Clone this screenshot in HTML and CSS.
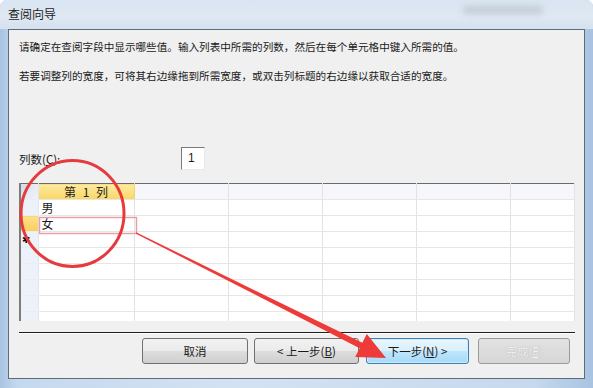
FILE: index.html
```html
<!DOCTYPE html>
<html lang="zh-CN">
<head>
    <meta charset="UTF-8">
    <title>查阅向导</title>
    <link rel="stylesheet" href="styles.css">
</head>
<body>
    <div class="window">
        <div class="titlebar">
            <span class="title">查阅向导</span>
            <span class="title-blur"></span>
        </div>

        <div class="panel">
            <div class="intro">
                <p>请确定在查阅字段中显示哪些值。输入列表中所需的列数，然后在每个单元格中键入所需的值。</p>
                <p>若要调整列的宽度，可将其右边缘拖到所需宽度，或双击列标题的右边缘以获取合适的宽度。</p>
            </div>

            <div class="count-row">
                <label>列数(<u>C</u>):</label>
                <div class="count-input">1</div>
            </div>

            <table class="grid">
                <colgroup>
                    <col class="sel-col">
                    <col class="first-col">
                    <col class="col"><col class="col"><col class="col"><col class="col">
                    <col>
                </colgroup>
                <tr class="head">
                    <th class="sel corner"></th>
                    <th class="active-head">第 1 列</th>
                    <th></th><th></th><th></th><th></th><th></th>
                </tr>
                <tr>
                    <td class="sel"></td><td>男</td><td></td><td></td><td></td><td></td><td></td>
                </tr>
                <tr class="current">
                    <td class="sel current-sel"></td><td>女</td><td></td><td></td><td></td><td></td><td></td>
                </tr>
                <tr>
                    <td class="sel star">✱</td><td></td><td></td><td></td><td></td><td></td><td></td>
                </tr>
                <tr><td class="sel"></td><td></td><td></td><td></td><td></td><td></td><td></td></tr>
                <tr><td class="sel"></td><td></td><td></td><td></td><td></td><td></td><td></td></tr>
                <tr><td class="sel"></td><td></td><td></td><td></td><td></td><td></td><td></td></tr>
                <tr><td class="sel"></td><td></td><td></td><td></td><td></td><td></td><td></td></tr>
                <tr class="last"><td class="sel"></td><td></td><td></td><td></td><td></td><td></td><td></td></tr>
            </table>

            <div class="separator"></div>

            <div class="buttons">
                <button class="btn cancel">取消</button>
                <button class="btn back">&lt; 上一步(<u>B</u>)</button>
                <button class="btn next">下一步(<u>N</u>) &gt;</button>
                <button class="btn finish">完成(<u>F</u>)</button>
            </div>
        </div>
    </div>

    <!-- red annotation drawn over the dialog -->
    <svg class="marks" width="593" height="388" viewBox="0 0 593 388">
        <rect x="39.5" y="217.5" width="97" height="16" fill="none" stroke="#e8a0a6" stroke-width="1.5"/>
        <ellipse cx="72.5" cy="213.5" rx="51.5" ry="53" fill="none" stroke="#e53b3d" stroke-width="3"/>
        <polygon points="136,232.3 362.3,342.8 366.8,333.9 386,358 355.2,357.1 359.7,348.2 136,233.7" fill="#ee3a38"/>
    </svg>
</body>
</html>
```

FILE: styles.css
```css
body {
    margin: 0;
    width: 593px;
    height: 388px;
    overflow: hidden;
    position: relative;
    font-family: "Noto Sans CJK SC", "DejaVu Sans", sans-serif;
    color: #1a1a1a;
}
.window {
    width: 593px;
    height: 388px;
    box-sizing: border-box;
    padding: 0 8px 9px 8px;
    border-radius: 7px 7px 0 0;
    background: linear-gradient(90deg, #a9c4e2 0%, #c5d9ee 3%, #d3e2f2 40%, #c6d9ed 90%, #a8c3e1 100%);
    display: flex;
    flex-direction: column;
}
.titlebar {
    height: 29px;
    display: flex;
    align-items: center;
    position: relative;
    background: linear-gradient(180deg, #d9e5f2 0%, #dfe8f2 60%, #d4e1ef 100%);
    margin: 0 -8px;
    padding: 0 8px;
    border-radius: 7px 7px 0 0;
}
.title {
    font-size: 12px;
    color: #1e1e1e;
    margin-top: -2px;
}
.title-blur {
    position: absolute;
    right: 50px;
    top: 6px;
    width: 80px;
    height: 8px;
    border-radius: 4px;
    background: #c3ccd6;
    filter: blur(3px);
}
.panel {
    flex: 1;
    background: #f0f0f0;
    border: 1px solid #5d6b7a;
    padding: 0 9px 11px 10px;
    display: flex;
    flex-direction: column;
}
.intro {
    padding-top: 9px;
    font-size: 10.6px;
    line-height: 16px;
}
.intro p {
    margin: 0 0 13px 0;
    white-space: nowrap;
}
.count-row {
    display: flex;
    align-items: center;
    margin-top: 50px;
    font-size: 11.5px;
}
.count-row label {
    width: 162px;
}
.count-input {
    width: 24px;
    height: 23px;
    box-sizing: border-box;
    background: #fff;
    border-top: 1px solid #7a7a7a;
    border-left: 1px solid #7a7a7a;
    border-right: 1px solid #e8e8e8;
    border-bottom: 1px solid #e8e8e8;
    padding: 3px 0 0 6px;
    font-family: "Liberation Sans", sans-serif;
    font-size: 12px;
}
.grid {
    margin-top: 13px;
    width: 556px;
    border-collapse: collapse;
    table-layout: fixed;
    background: #fff;
    border-top: 1px solid #6a6a6a;
    border-left: 2px solid #7c7c7c;
    font-size: 12px;
}
.sel-col { width: 18px; }
.first-col { width: 96px; }
.col { width: 94px; }
.grid th, .grid td {
    height: 15px;
    padding: 0 0 0 3px;
    border-right: 1px solid #e3e3e3;
    border-bottom: 1px solid #e6e6e6;
    line-height: 15px;
    text-align: left;
    font-weight: normal;
    overflow: hidden;
    white-space: nowrap;
}
.grid th {
    background: #f5f7fd;
    text-align: center;
    padding: 0;
}
.grid th.active-head {
    background: linear-gradient(180deg, #fde9a0 0%, #f9d766 100%);
    border-right: 1px solid #f0d27a;
    color: #222;
    word-spacing: 4px;
}
.grid .sel {
    background: #edf2fa;
    border-right: 1px solid #dfe6f1;
    border-bottom: 1px solid #e8edf6;
    padding: 0;
}
.grid th.corner {
    background: linear-gradient(135deg, #cfd8e6 0%, #e3e9f3 45%, #eef2f8 100%);
}
.grid .current-sel {
    background: linear-gradient(180deg, #fde08a 0%, #f8cf5a 100%);
}
.grid .star {
    font-family: "DejaVu Sans", sans-serif;
    font-size: 10px;
    line-height: 15px;
    padding-left: 1px;
    color: #000;
    vertical-align: top;
}
.grid tr.last td {
    height: 9px;
    border-bottom: none;
}
.separator {
    margin-top: 11px;
    height: 1px;
    width: 556px;
    background: #1f1f1f;
    border-bottom: 1px solid #fff;
}
.buttons {
    margin-top: 4px;
    display: flex;
    justify-content: flex-end;
    padding-right: 5px;
}
.btn {
    height: 26px;
    box-sizing: border-box;
    border: 1px solid #707070;
    border-radius: 3px;
    background: linear-gradient(180deg, #f2f2f2 0%, #ebebeb 48%, #dddddd 52%, #cfcfcf 100%);
    font-family: "Noto Sans CJK SC", sans-serif;
    font-size: 11.5px;
    color: #1a1a1a;
    padding: 0;
}
.cancel { width: 106px; }
.back { width: 105px; margin-left: 6px; }
.next {
    width: 103px;
    margin-left: 7px;
    border-color: #3c7fb1;
    background: linear-gradient(180deg, #eaf6fd 0%, #d9f0fc 48%, #bee6fd 52%, #a7d9f5 100%);
    box-shadow: inset 0 0 0 1px #cfeafb;
}
.finish {
    width: 92px;
    margin-left: 9px;
    color: #f4f4f4;
    border-color: #9a9a9a;
    background: linear-gradient(180deg, #e2e2e2 0%, #d6d6d6 100%);
    text-shadow: 0 0 1px #999;
}
.marks {
    position: absolute;
    left: 0;
    top: 0;
    pointer-events: none;
}
```
